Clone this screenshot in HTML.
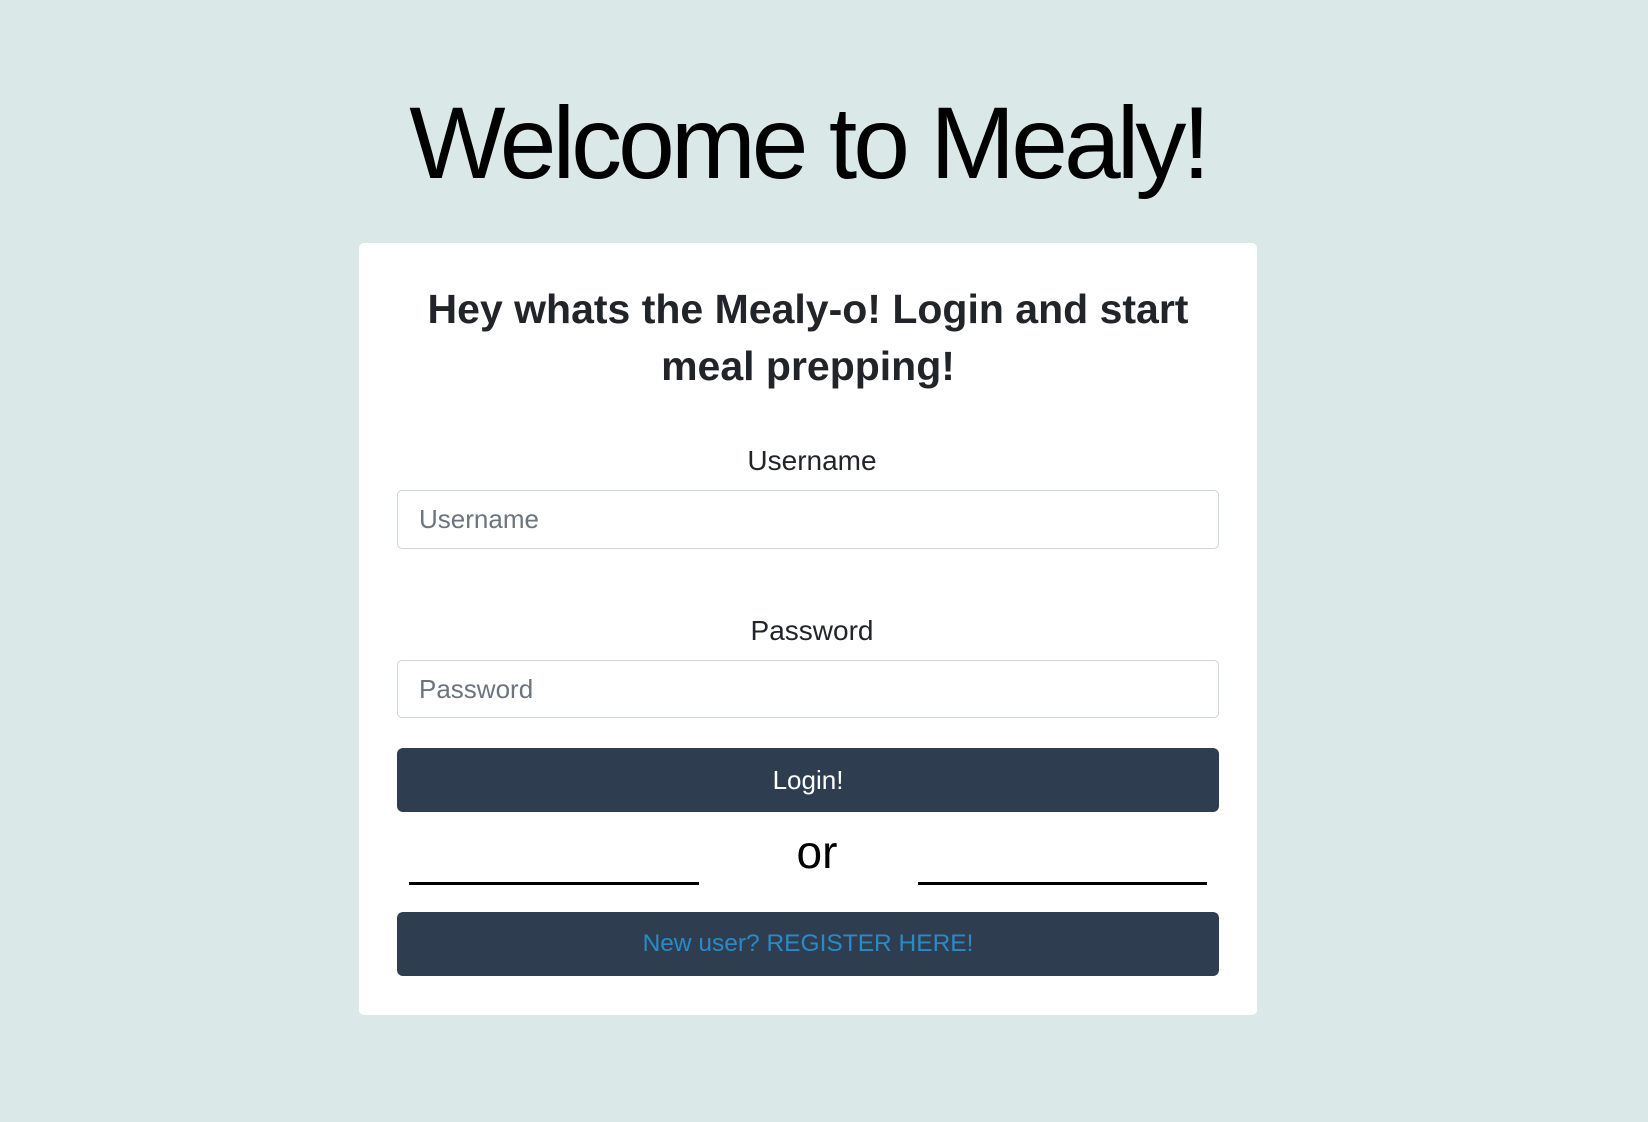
<!DOCTYPE html>
<html><head><meta charset="utf-8"><style>
*{margin:0;padding:0;box-sizing:border-box}
html,body{width:1648px;height:1122px;overflow:hidden;background:#dae8e7;font-family:"Liberation Sans",sans-serif}
.abs{position:absolute}
.c{text-align:center;white-space:nowrap}
#title{left:0;width:1616px;top:92px;font-size:102px;line-height:102px;letter-spacing:-4px;color:#000}
#card{left:359px;top:243px;width:898px;height:772px;background:#fff;border-radius:5px}
.h{left:359px;width:898px;font-size:41px;font-weight:bold;color:#212529;line-height:44px;letter-spacing:0}
.lbl{left:359px;width:898px;font-size:28px;color:#212529;line-height:32px}
.inp{left:397px;width:822px;height:59px;border:1px solid #ced4da;border-radius:5px;background:#fff;font-size:26px;color:#6c757d;padding-left:21px;line-height:57px}
.btn{left:397px;width:822px;height:64px;background:#2e3e50;border-radius:6px;line-height:64px;text-align:center}
.ln{height:3px;background:#000;top:882px}
</style></head><body>
<div id="title" class="abs c">Welcome to Mealy!</div>
<div id="card" class="abs"></div>
<div class="abs c h" style="top:287px">Hey whats the Mealy-o! Login and start</div>
<div class="abs c h" style="top:344px">meal prepping!</div>
<div class="abs c lbl" style="top:445px;left:363px">Username</div>
<div class="abs inp" style="top:490px">Username</div>
<div class="abs c lbl" style="top:615px;left:363px">Password</div>
<div class="abs inp" style="top:660px;height:58px">Password</div>
<div class="abs btn" style="top:748px;color:#fff;font-size:26px">Login!</div>
<div class="abs c" style="left:717px;width:200px;top:826px;font-size:46px;line-height:52px;color:#000">or</div>
<div class="abs ln" style="left:409px;width:290px"></div>
<div class="abs ln" style="left:918px;width:289px"></div>
<div class="abs btn" style="top:912px;color:#2a8ac6;font-size:24.5px">New user? REGISTER HERE!</div>
</body></html>
